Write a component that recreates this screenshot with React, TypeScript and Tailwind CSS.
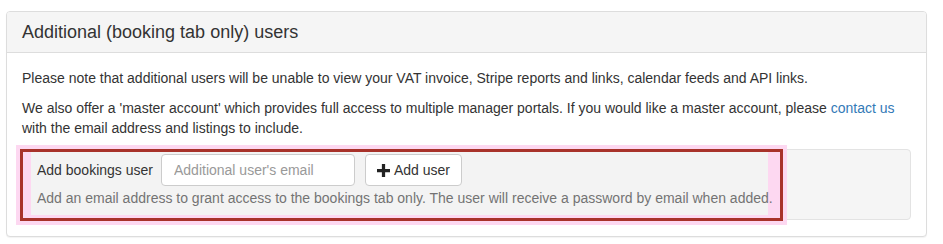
export default function App() {
  return (
    <div className="bg-white w-[943px] h-[244px] pt-[11px] pl-[6px] font-['Liberation_Sans',Arial,sans-serif] text-[#333] text-[14px] leading-[20px]">
      <div className="w-[921px] border border-[#ddd] rounded-[4px] shadow-[0_1px_1px_rgba(0,0,0,0.05)] bg-white">
        <div className="bg-[#f5f5f5] border-b border-[#ddd] rounded-t-[3px] px-[15px] py-[10px]">
          <h3 className="text-[18px] leading-[20px] text-[#333]">Additional (booking tab only) users</h3>
        </div>
        <div className="px-[15px] pt-[15px] pb-[16px]">
          <p className="mb-[10px]">
            Please note that additional users will be unable to view your VAT invoice, Stripe reports and links, calendar feeds and API links.
          </p>
          <p className="mb-[11px]">
            We also offer a 'master account' which provides full access to multiple manager portals. If you would like a master account, please{" "}
            <a href="#" className="text-[#337ab7]">contact us</a> with the email address and listings to include.
          </p>
          <div className="-ml-[2px] w-[891px] h-[71px] bg-[#f5f5f5] border border-[#e3e3e3] rounded-[4px]">
            <div className="-mt-[1px] -ml-[1px] w-[763px] h-[72px] border-[3px] border-[#a8322a] outline-4 outline-[#fdd8f1] bg-[#fdd8f1] pl-[8px] pr-[12px] pb-[3px]">
              <div className="bg-[#f3f3f3] h-full pl-[6px] pt-[2px]">
                <div className="flex items-center">
                  <label className="text-[#333] mr-[8px]">Add bookings user</label>
                  <input
                    type="email"
                    placeholder="Additional user's email"
                    className="w-[194px] h-[32px] px-[12px] bg-white border border-[#ccc] rounded-[4px] text-[14px] placeholder:text-[#999] outline-none"
                  />
                  <button className="ml-[10px] h-[32px] w-[97px] flex items-center justify-center gap-[4px] bg-white border border-[#ccc] rounded-[4px] text-[#333] text-[14px]">
                    <svg width="13" height="13" viewBox="0 0 12 12" className="mt-[1px]">
                      <path d="M4.5 0h3v4.5H12v3H7.5V12h-3V7.5H0v-3h4.5z" fill="#222" />
                    </svg>
                    Add user
                  </button>
                </div>
                <div className="mt-[2px] text-[#737373] whitespace-nowrap">
                  Add an email address to grant access to the bookings tab only. The user will receive a password by email when added.
                </div>
              </div>
            </div>
          </div>
        </div>
      </div>
    </div>
  );
}
